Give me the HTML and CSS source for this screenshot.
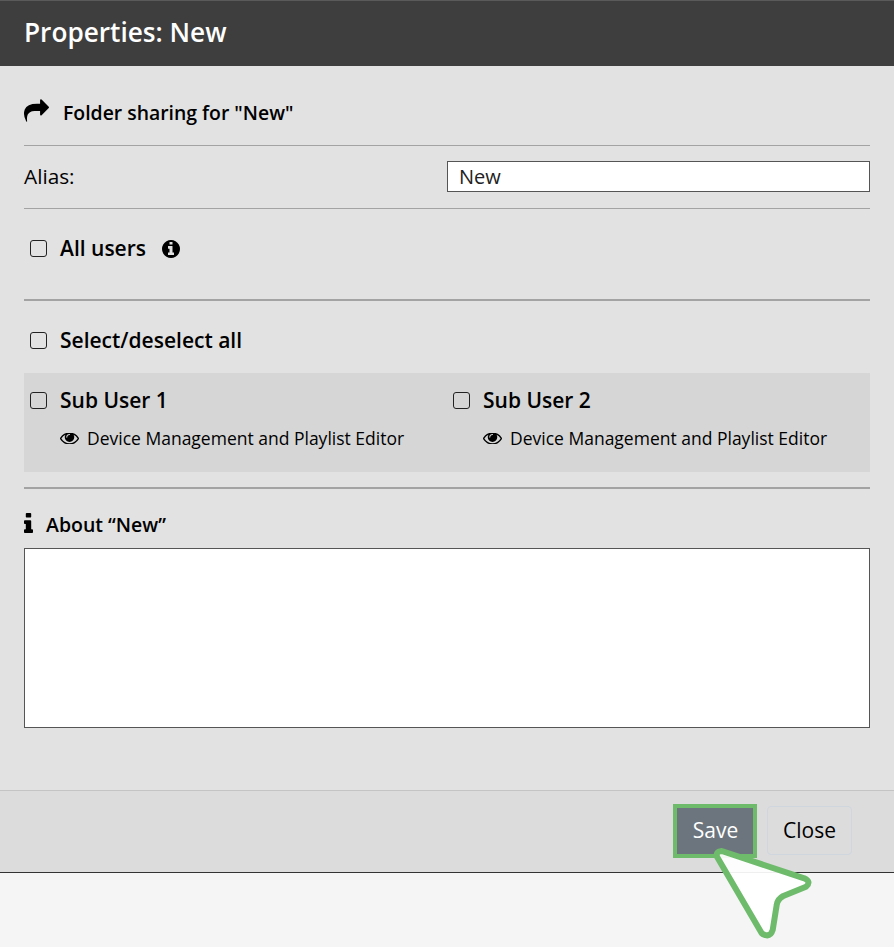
FILE: index.html
```html
<!DOCTYPE html>
<html lang="en">
<head>
  <meta charset="UTF-8" />
  <title>Properties: New</title>
  <link rel="stylesheet" href="styles.css">
</head>
<body>

  <div class="modal">
    <header class="modal-head">Properties: New</header>

    <div class="modal-body">
      <div class="share-title">
        <svg class="icon-share" viewBox="0 64 1792 1600"><path d="M1792 640q0 26-19 45l-512 512q-19 19-45 19t-45-19-19-45v-256h-224q-98 0-175.500 6t-154 21.500-133 42.500-105.500 69.500-80 101-48.500 138.500-17.500 181q0 55 5 123 0 6 2.500 23.500t2.500 26.500q0 15-8.500 25t-23.500 10q-16 0-28-17-7-9-13-22t-13.500-30-10.500-24q-127-285-127-451 0-199 53-333 162-403 875-403h224v-256q0-26 19-45t45-19 45 19l512 512q19 19 19 45z"/></svg>
        <span>Folder sharing for "New"</span>
      </div>

      <div class="alias-row">
        <label for="alias">Alias:</label>
        <input type="text" id="alias" value="New" />
      </div>

      <div class="all-users">
        <label class="check"><input type="checkbox" /><span>All users</span></label>
        <svg class="icon-info-circle" viewBox="128 128 1536 1536"><path d="M1152 1376v-160q0-14-9-23t-23-9h-96v-512q0-14-9-23t-23-9h-320q-14 0-23 9t-9 23v160q0 14 9 23t23 9h96v320h-96q-14 0-23 9t-9 23v160q0 14 9 23t23 9h448q14 0 23-9t9-23zm-128-896v-160q0-14-9-23t-23-9h-192q-14 0-23 9t-9 23v160q0 14 9 23t23 9h192q14 0 23-9t9-23zm640 416q0 209-103 385.500t-279.500 279.500-385.500 103-385.500-103-279.500-279.500-103-385.500 103-385.500 279.500-279.500 385.500-103 385.500 103 279.500 279.500 103 385.500z"/></svg>
      </div>

      <div class="select-all">
        <label class="check"><input type="checkbox" /><span>Select/deselect all</span></label>
      </div>

      <div class="users">
        <div class="user">
          <label class="check"><input type="checkbox" /><span>Sub User 1</span></label>
          <div class="role">
            <svg class="icon-eye" viewBox="0 448 1792 1024"><path d="M1664 960q-152-236-381-353 61 104 61 225 0 185-131.500 316.500t-316.500 131.500-316.500-131.500-131.500-316.500q0-121 61-225-229 117-381 353 133 205 333.500 326.500t434.500 121.500 434.500-121.500 333.500-326.500zm-720-384q0-20-14-34t-34-14q-125 0-214.500 89.500t-89.500 214.500q0 20 14 34t34 14 34-14 14-34q0-86 61-147t147-61q20 0 34-14t14-34zm848 384q0 34-20 69-140 230-376.500 368.500t-499.500 138.500-499.500-139-376.500-368q-20-35-20-69t20-69q140-229 376.500-368t499.500-139 499.500 139 376.500 369q20 35 20 69z"/></svg>
            <span>Device Management and Playlist Editor</span>
          </div>
        </div>
        <div class="user">
          <label class="check"><input type="checkbox" /><span>Sub User 2</span></label>
          <div class="role">
            <svg class="icon-eye" viewBox="0 448 1792 1024"><path d="M1664 960q-152-236-381-353 61 104 61 225 0 185-131.500 316.500t-316.500 131.500-316.500-131.500-131.500-316.500q0-121 61-225-229 117-381 353 133 205 333.500 326.500t434.500 121.500 434.500-121.500 333.500-326.500zm-720-384q0-20-14-34t-34-14q-125 0-214.500 89.500t-89.500 214.500q0 20 14 34t34 14 34-14 14-34q0-86 61-147t147-61q20 0 34-14t14-34zm848 384q0 34-20 69-140 230-376.500 368.500t-499.500 138.500-499.500-139-376.500-368q-20-35-20-69t20-69q140-229 376.500-368t499.500-139 499.500 139 376.500 369q20 35 20 69z"/></svg>
            <span>Device Management and Playlist Editor</span>
          </div>
        </div>
      </div>

      <div class="about-title">
        <svg class="icon-info" viewBox="576 128 640 1408"><path d="M1216 1344v128q0 26-19 45t-45 19h-512q-26 0-45-19t-19-45v-128q0-26 19-45t45-19h64v-384h-64q-26 0-45-19t-19-45v-128q0-26 19-45t45-19h384q26 0 45 19t19 45v576h64q26 0 45 19t19 45zm-128-1152v192q0 26-19 45t-45 19h-256q-26 0-45-19t-19-45v-192q0-26 19-45t45-19h256q26 0 45 19t19 45z"/></svg>
        <span>About “New”</span>
      </div>
      <textarea class="about-text"></textarea>
    </div>

    <footer class="modal-foot">
      <button type="button" class="btn btn-save">Save</button>
      <button type="button" class="btn btn-close">Close</button>
    </footer>
  </div>

  <svg class="pointer" viewBox="700 840 120 105"><path d="M717.3 857.3Q715 851.700 721.700 851L804.300 878.300Q811.700 881.700 806 886.700L783.300 896Q777.300 899.300 776.700 905L772.700 930Q770.700 936.700 765 935Q763 934.500 761.700 933.300Z"/></svg>

</body>
</html>
```

FILE: styles.css
```css
* {
  box-sizing: border-box;
}
body {
  font-family: "Open Sans", Arial, sans-serif;
  background-color: #f5f5f5;
  color: #000;
  margin: 0;
  height: 947px;
  position: relative;
  overflow: hidden;
}
.modal {
  height: 873px;
  display: flex;
  flex-direction: column;
  background-color: #e2e2e2;
  border-bottom: 1px solid #333;
}
.modal-head {
  height: 66px;
  background-color: #3e3e3e;
  border-top: 1px solid #5a5a5a;
  color: white;
  font-size: 26.2px;
  font-weight: 600;
  line-height: 62px;
  padding: 0 24px;
}
.modal-body {
  flex: 1;
  padding: 0 24px;
}
.share-title {
  height: 80px;
  display: flex;
  align-items: center;
  gap: 14px;
  padding-top: 14px;
  font-size: 19.4px;
  font-weight: 600;
  border-bottom: 1px solid #a3a3a3;
}
.icon-share {
  width: 25px;
  height: 23px;
  margin-top: -4px;
}
.alias-row {
  height: 63px;
  display: flex;
  justify-content: space-between;
  align-items: center;
  padding-bottom: 2px;
  font-size: 20.8px;
  border-bottom: 1px solid #a3a3a3;
}
.alias-row input {
  width: 423px;
  height: 31px;
  font-family: inherit;
  font-size: 20px;
  color: #222;
  padding: 0 11px;
  border: 1px solid #555;
  background: white;
  border-radius: 0;
}
.check {
  display: flex;
  align-items: center;
  gap: 13px;
  padding-left: 6px;
  font-size: 21px;
  font-weight: 600;
}
.check input {
  appearance: none;
  width: 17px;
  height: 17px;
  margin: 0;
  background: transparent;
  border: 1.5px solid #222;
  border-radius: 3px;
}
.all-users {
  height: 92px;
  display: flex;
  align-items: flex-start;
  gap: 16px;
  padding-top: 25px;
  border-bottom: 2px solid #a3a3a3;
}
.icon-info-circle {
  width: 18px;
  height: 18px;
  margin-top: 6px;
}
.select-all {
  height: 72px;
  padding-top: 25px;
}
.users {
  height: 99px;
  display: grid;
  grid-template-columns: 423px 1fr;
  background-color: #d6d6d6;
}
.user {
  padding-top: 13px;
}
.role {
  display: flex;
  align-items: center;
  gap: 8px;
  margin: 12px 0 0 36px;
  font-size: 17.5px;
}
.icon-eye {
  width: 19px;
  height: 11px;
}
.about-title {
  margin-top: 15px;
  height: 61px;
  display: flex;
  align-items: center;
  gap: 13px;
  padding-top: 11px;
  font-size: 19.5px;
  font-weight: 600;
  border-top: 2px solid #a3a3a3;
}
.icon-info {
  width: 9px;
  height: 20px;
  margin-top: -3px;
}
.about-text {
  display: block;
  width: 100%;
  height: 180px;
  border: 1px solid #555;
  background: white;
  resize: none;
  border-radius: 0;
}
.modal-foot {
  height: 82px;
  display: flex;
  justify-content: flex-end;
  align-items: flex-start;
  gap: 14px;
  padding: 17px 42px 0 0;
  background-color: #dcdcdc;
  border-top: 1px solid #c4c4c4;
}
.btn {
  font-family: inherit;
  font-size: 21px;
  cursor: pointer;
}
.btn-save {
  width: 76px;
  height: 46px;
  padding: 0 0 2px 1px;
  background-color: #6c757d;
  color: white;
  border: none;
  outline: 4px solid #6fbb6c;
}
.btn-close {
  width: 85px;
  height: 49px;
  margin-top: -2px;
  padding: 0 0 2px;
  background-color: transparent;
  color: black;
  border: 1px solid #d0d6de;
  border-radius: 4px;
}
.pointer {
  position: absolute;
  left: 700px;
  top: 840px;
  width: 120px;
  height: 105px;
  fill: rgba(255, 255, 255, 0.92);
  stroke: #6fbb6c;
  stroke-width: 6;
  stroke-linejoin: round;
}
```
